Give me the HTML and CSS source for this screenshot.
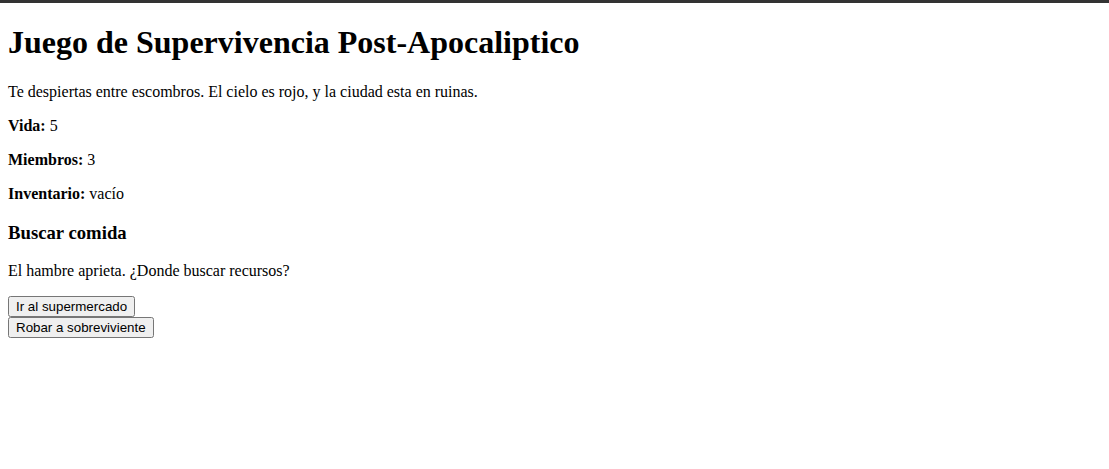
FILE: index.html
```html
<!DOCTYPE html>
<html lang="es">
<head>
<meta charset="utf-8">
<title>Juego de Supervivencia</title>
<link rel="stylesheet" href="styles.css">
</head>
<body>
<div class="topbar"></div>
<main class="game">
  <h1 class="title">Juego de Supervivencia Post-Apocaliptico</h1>
  <p class="story">Te despiertas entre escombros. El cielo es rojo, y la ciudad esta en ruinas.</p>
  <p class="stat"><strong>Vida:</strong> 5</p>
  <p class="stat"><strong>Miembros:</strong> 3</p>
  <p class="stat"><strong>Inventario:</strong> vacío</p>
  <h3 class="scene-title">Buscar comida</h3>
  <p class="scene-text">El hambre aprieta. ¿Donde buscar recursos?</p>
  <div class="choices">
    <button class="choice">Ir al supermercado</button><br>
    <button class="choice">Robar a sobreviviente</button>
  </div>
</main>
</body>
</html>
```
FILE: styles.css
```css
html, body {
  margin: 0;
  padding: 0;
  background: #fff;
}
body {
  font-family: "Liberation Serif", "Times New Roman", serif;
  font-size: 16px;
  color: #000;
}
.topbar {
  height: 3px;
  background: #333;
}
.game {
  padding: 0 8px;
}
.title {
  font-size: 32px;
  margin: 0.67em 0;
}
.story, .stat, .scene-text {
  margin: 1em 0;
}
.scene-title {
  font-size: 1.17em;
  margin: 1em 0;
}
.choice {
  font-family: "Liberation Sans", Arial, sans-serif;
  font-size: 13.333px;
}
```
